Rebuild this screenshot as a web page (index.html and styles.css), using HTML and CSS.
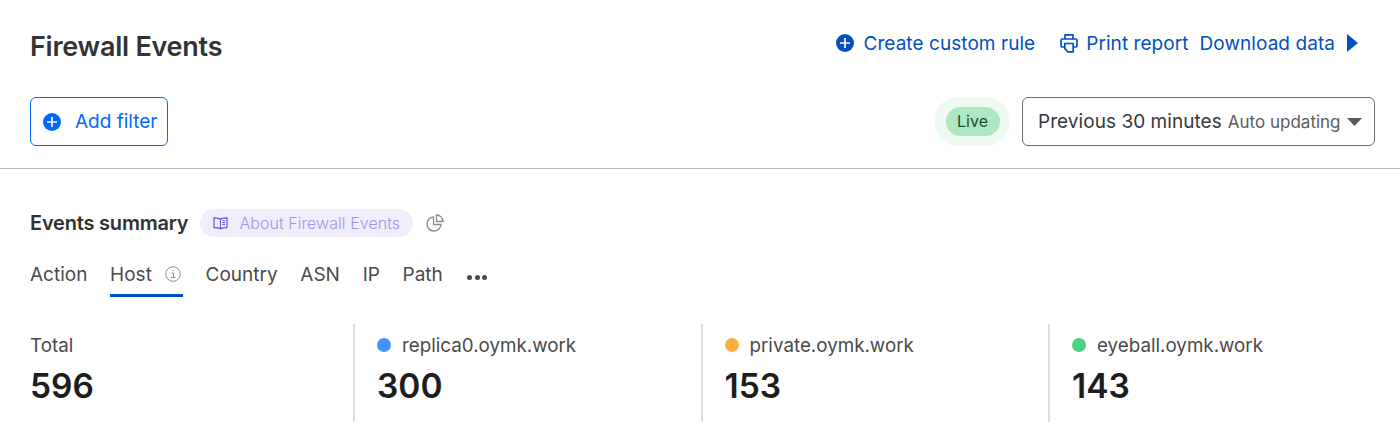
FILE: index.html
```html
<!DOCTYPE html>
<html lang="en">
<head>
<meta charset="utf-8">
<title>Firewall Events</title>
<link rel="stylesheet" href="styles.css">
</head>
<body>
<header class="top">
  <div class="title-row">
    <h1 class="title">Firewall Events</h1>
    <nav class="actions">
      <a class="action action-rule"><svg class="icon16" viewBox="0 0 18 18"><circle cx="9" cy="9" r="9" fill="#0051c3"/><path d="M9 4v10M4 9h10" stroke="#fff" stroke-width="1.7"/></svg>Create custom rule</a>
      <a class="action action-print"><svg class="icon-print" viewBox="0 0 18 20" fill="none" stroke="#0051c3" stroke-width="1.7" stroke-linejoin="round"><path d="M5 6V1.800h8V6"/><path d="M4.500 14H2.200A1.200 1.200 0 0 1 1 12.800V7.200A1.200 1.200 0 0 1 2.200 6h13.600A1.200 1.200 0 0 1 17 7.200v5.600a1.200 1.200 0 0 1-1.200 1.200h-2.300"/><path d="M4.800 10.500h8.400v8.300H8l-3.200-3.200z"/></svg>Print report</a>
      <a class="action action-download">Download data<svg class="icon-caret" viewBox="0 0 11 18"><path d="M0 0l11 9-11 9z" fill="#0051c3"/></svg></a>
    </nav>
  </div>
  <div class="filter-row">
    <button class="add-filter"><svg class="icon-plus" viewBox="0 0 18 18"><circle cx="9" cy="9" r="9" fill="#0069ff"/><path d="M9 4v10M4 9h10" stroke="#fff" stroke-width="1.7"/></svg>Add filter</button>
    <div class="time-controls">
      <div class="live-halo"><span class="live">Live</span></div>
      <div class="time-select">
        <span class="time-main">Previous 30 minutes</span>
        <span class="time-sub">Auto updating</span>
        <svg class="time-caret" viewBox="0 0 15 8"><path d="M0 0h15L7.500 8z" fill="#595959"/></svg>
      </div>
    </div>
  </div>
</header>
<main class="summary">
  <div class="summary-head">
    <h2 class="summary-title">Events summary</h2>
    <a class="about"><svg class="icon-book" viewBox="0 0 16 14" fill="none" stroke="#5e45e0" stroke-width="1.200"><path d="M8 2.500C6.500 1.300 4 1 1 1v10.500c3 0 5.500.2 7 1.300 1.500-1.100 4-1.300 7-1.300V1c-3 0-5.500.3-7 1.500z"/><path d="M8 2.500v10.300M10 4h3M10 6h3M10 8h3" stroke-width="1"/></svg>About Firewall Events</a>
    <svg class="icon-pie" viewBox="0 0 18 18" fill="none" stroke="#8a8a8a" stroke-width="1.300"><path d="M7.500 3A7 7 0 1 0 15 10.500H7.500z"/><path d="M10.500 1a6.500 6.500 0 0 1 6.500 6.500h-6.500z"/></svg>
  </div>
  <div class="tabs">
    <span class="tab">Action</span>
    <span class="tab tab-active">Host<svg class="icon-info" viewBox="0 0 16 16" fill="none" stroke="#8f8f8f"><circle cx="8" cy="8" r="7.300"/><path d="M6.500 7h2v4.500M6 11.500h4.500M8 4v1.300" stroke-width="1"/></svg></span>
    <span class="tab">Country</span>
    <span class="tab">ASN</span>
    <span class="tab">IP</span>
    <span class="tab">Path</span>
    <span class="more"><i></i><i></i><i></i></span>
  </div>
  <div class="stats">
    <div class="stat">
      <div class="stat-label">Total</div>
      <div class="stat-value">596</div>
    </div>
    <div class="stat">
      <div class="stat-label"><span class="dot dot-blue"></span>replica0.oymk.work</div>
      <div class="stat-value">300</div>
    </div>
    <div class="stat">
      <div class="stat-label"><span class="dot dot-orange"></span>private.oymk.work</div>
      <div class="stat-value">153</div>
    </div>
    <div class="stat">
      <div class="stat-label"><span class="dot dot-green"></span>eyeball.oymk.work</div>
      <div class="stat-value">143</div>
    </div>
  </div>
</main>
</body>
</html>
```
FILE: styles.css
```css
* { box-sizing: border-box; }
html, body { margin: 0; padding: 0; }
body {
  width: 1400px;
  height: 445px;
  overflow: hidden;
  background: #fff;
  color: #36393a;
  font-family: Inter, "Liberation Sans", sans-serif;
}
.top {
  height: 169px;
  padding: 0 25px 0 30px;
  border-bottom: 1px solid #b9b9b9;
}
.title-row {
  display: flex;
  justify-content: space-between;
  align-items: flex-start;
  height: 97px;
}
.title {
  margin: 31px 0 0;
  font-size: 27px;
  line-height: 32px;
  font-weight: 600;
  letter-spacing: -0.25px;
  color: #333;
}
.actions {
  display: flex;
  align-items: center;
  margin-top: 31px;
  height: 24px;
  padding-right: 17px;
  color: #0051c3;
  font-size: 19px;
  letter-spacing: 0.06px;
}
.action { display: flex; align-items: center; white-space: nowrap; }
.action-rule { margin-right: 25px; }
.action-print { margin-right: 11px; }
.icon16 { width: 18px; height: 18px; margin-right: 9px; }
.icon-print { width: 18px; height: 20px; margin-right: 8px; }
.icon-caret { width: 11px; height: 18px; margin-left: 12px; }
.filter-row { display: flex; justify-content: space-between; align-items: center; height: 49px; }
.add-filter {
  display: flex;
  align-items: center;
  height: 49px;
  width: 138px;
  padding: 0 0 0 12px;
  background: #fff;
  border: 1px solid #0069ff;
  border-radius: 6px;
  color: #0069ff;
  font: 400 19px Inter, "Liberation Sans", sans-serif;
}
.icon-plus { width: 18px; height: 18px; margin-right: 14px; }
.time-controls { display: flex; align-items: center; gap: 12px; }
.live-halo {
  display: flex;
  align-items: center;
  justify-content: center;
  width: 76px;
  height: 49px;
  padding-left: 1px;
  background: #eefaf1;
  border-radius: 24px;
}
.live {
  display: block;
  width: 54px;
  height: 29px;
  line-height: 29px;
  text-align: center;
  background: #ade8c0;
  border-radius: 15px;
  font-size: 16px;
  color: #234a30;
}
.time-select {
  display: flex;
  align-items: center;
  width: 353px;
  height: 49px;
  padding-left: 15px;
  border: 1px solid #6e6e6e;
  border-radius: 6px;
  white-space: nowrap;
}
.time-main { font-size: 19px; letter-spacing: 0.05px; color: #36393a; }
.time-sub { margin-left: 6px; font-size: 17px; color: #5c5c5c; }
.time-caret { width: 15px; height: 8px; margin-left: 6px; }
.summary { padding: 40px 0 0 30px; }
.summary-head { display: flex; align-items: center; height: 28px; }
.summary-title {
  margin: 0;
  font-size: 20px;
  font-weight: 600;
  letter-spacing: -0.2px;
  color: #313131;
}
.about {
  display: flex;
  align-items: center;
  height: 28px;
  width: 213px;
  margin-left: 12px;
  padding-left: 13px;
  background: #f0eefb;
  border-radius: 14px;
  color: #a294e8;
  font-size: 16px;
  font-weight: 300;
  letter-spacing: 0.05px;
  white-space: nowrap;
}
.icon-book { width: 15px; height: 13px; margin-right: 11px; }
.icon-pie { width: 18px; height: 18px; margin-left: 13px; }
.tabs { display: flex; align-items: flex-start; height: 73px; margin-top: 14px; font-size: 19px; color: #4a4a4a; }
.tab { display: flex; align-items: center; height: 46px; padding-top: 3px; margin-right: 22.700px; border-bottom: 3px solid transparent; white-space: nowrap; }
.tab-active { padding-right: 2px; border-bottom-color: #0051c3; }
.icon-info { width: 16px; height: 16px; margin-left: 13px; }
.more { display: flex; gap: 2.500px; margin: 24px 0 0 1.500px; }
.more i { display: block; width: 5px; height: 5px; border-radius: 50%; background: #4a4a4a; }
.stats { display: grid; grid-template-columns: 323px 347.500px 347.500px 322px; }
.stat { height: 98px; padding: 8px 0 0 22px; border-left: 2px solid #dcdcdc; }
.stat:first-child { border-left: 0; padding-left: 0; }
.stat-label { display: flex; align-items: center; height: 26px; font-size: 18.800px; color: #4a4a4a; white-space: nowrap; }
.stat-value { margin-top: 8px; font-size: 33.500px; line-height: 40px; font-weight: 600; color: #1d1d1d; }
.dot { width: 14px; height: 14px; border-radius: 50%; margin-right: 11px; }
.dot-blue { background: #4693ff; }
.dot-orange { background: #ffad45; }
.dot-green { background: #4ad27f; }
```
